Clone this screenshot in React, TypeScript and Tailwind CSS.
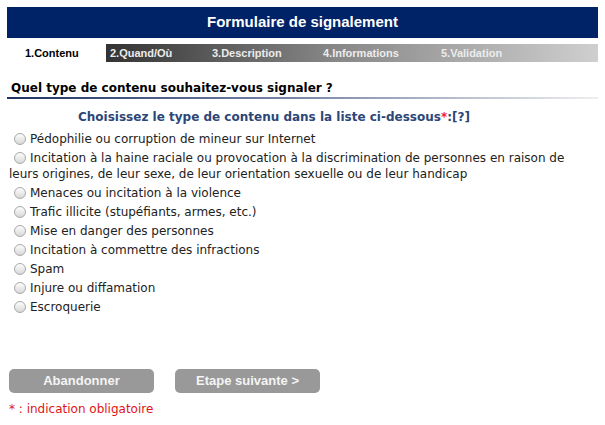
import React from 'react';

const options = [
  'Pédophilie ou corruption de mineur sur Internet',
  'Incitation à la haine raciale ou provocation à la discrimination de personnes en raison de leurs origines, de leur sexe, de leur orientation sexuelle ou de leur handicap',
  'Menaces ou incitation à la violence',
  'Trafic illicite (stupéfiants, armes, etc.)',
  'Mise en danger des personnes',
  'Incitation à commettre des infractions',
  'Spam',
  'Injure ou diffamation',
  'Escroquerie',
];

const steps = [
  { label: '2.Quand/Où', w: 'w-[102px]' },
  { label: '3.Description', w: 'w-[111px]' },
  { label: '4.Informations', w: 'w-[118px]' },
  { label: '5.Validation', w: 'flex-1' },
];

const Radio: React.FC = () => (
  <span className="inline-block align-[-2px] w-[12px] h-[12px] rounded-full border border-[#a9a9a9] bg-[linear-gradient(180deg,#fdfdfd,#d8d8d8)] ml-[5px] mr-[4px]" />
);

const App: React.FC = () => {
  return (
    <div className="w-[605px] h-[425px] bg-white px-[7px] pt-[7px] font-['DejaVu_Sans',sans-serif] text-[12px] text-[#222]">
      <div className="h-[31px] bg-[#002266] flex items-center justify-center">
        <h1 className="text-white font-bold text-[15px] font-['Liberation_Sans',Arial,sans-serif]">Formulaire de signalement</h1>
      </div>

      <div className="mt-[6px] h-[18px] flex text-[11px] font-bold font-['Liberation_Sans',Arial,sans-serif] leading-[18px]">
        <div className="w-[99px] pl-[18px] text-black bg-white">1.Contenu</div>
        <div className="flex-1 flex bg-[linear-gradient(90deg,#333333,#858585_45%,#cfcfcf)] text-[#ececec]">
          {steps.map(s => (
            <div key={s.label} className={`${s.w} pl-[4px]`}>{s.label}</div>
          ))}
        </div>
      </div>

      <h2 className="mt-[18px] pl-[4px] font-bold text-[12px] leading-[16px] text-black">Quel type de contenu souhaitez-vous signaler ?</h2>
      <div className="mt-[1px] h-[2px] bg-[linear-gradient(90deg,#1c3263,#8592b0_55%,#eeeeee)]" />

      <p className="mt-[10px] pl-[71px] font-bold text-[12px] leading-[16px] text-[#2c4677]">
        Choisissez le type de contenu dans la liste ci-dessous<span className="text-[#ee2222]">*</span>:[?]
      </p>

      <ul className="mt-[6px] pl-[2px] w-[577px]">
        {options.map(o => (
          <li key={o} className="leading-[16px] mb-[3px]">
            <Radio />
            {o}
          </li>
        ))}
      </ul>

      <div className="mt-[54px] pl-[2px] flex gap-[21px]">
        <button className="w-[145px] h-[24px] rounded-[5px] bg-[#999999] text-[#f4f4f4] font-bold text-[13px] font-['Liberation_Sans',Arial,sans-serif]">Abandonner</button>
        <button className="w-[145px] h-[24px] rounded-[5px] bg-[#999999] text-[#f4f4f4] font-bold text-[13px] font-['Liberation_Sans',Arial,sans-serif]">Etape suivante &gt;</button>
      </div>

      <p className="mt-[8px] pl-[2px] leading-[16px] text-[#e01515]">* : indication obligatoire</p>
    </div>
  );
};

export default App;
